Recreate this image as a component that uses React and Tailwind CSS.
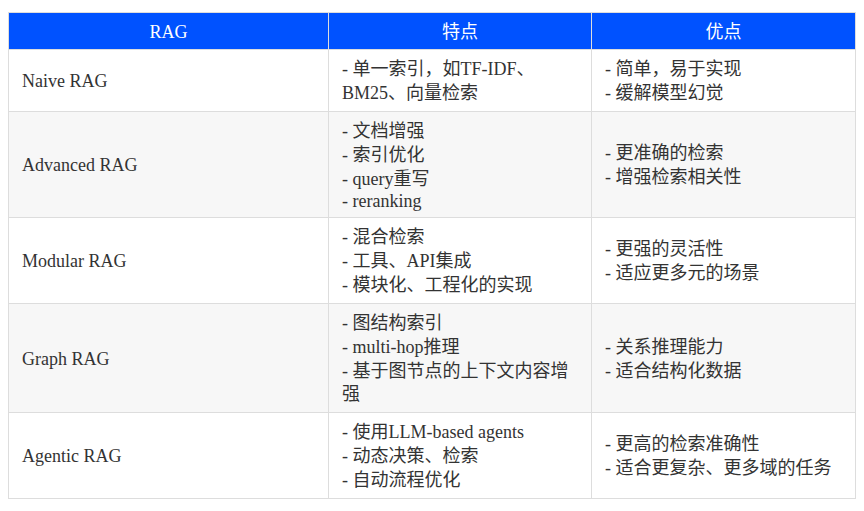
import React from "react";

const rows = [
  {
    name: "Naive RAG",
    feat: ["- 单一索引，如TF-IDF、", "BM25、向量检索"],
    adv: ["- 简单，易于实现", "- 缓解模型幻觉"],
  },
  {
    name: "Advanced RAG",
    feat: ["- 文档增强", "- 索引优化", "- query重写", { t: "- reranking", h: "leading-[20px]" }],
    adv: ["- 更准确的检索", "- 增强检索相关性"],
  },
  {
    name: "Modular RAG",
    feat: ["- 混合检索", "- 工具、API集成", "- 模块化、工程化的实现"],
    adv: ["- 更强的灵活性", "- 适应更多元的场景"],
  },
  {
    name: "Graph RAG",
    feat: ["- 图结构索引", "- multi-hop推理", "- 基于图节点的上下文内容增", { t: "强", h: "leading-[23px]" }],
    adv: ["- 关系推理能力", "- 适合结构化数据"],
  },
  {
    name: "Agentic RAG",
    feat: ["- 使用LLM-based agents", "- 动态决策、检索", "- 自动流程优化"],
    adv: ["- 更高的检索准确性", "- 适合更复杂、更多域的任务"],
  },
];

const FONT =
  "font-['Liberation_Serif','Noto_Sans_CJK_SC',serif]";

function Lines({ items }) {
  return (
    <div>
      {items.map((it, i) => {
        const obj = typeof it === "object";
        const text = obj ? it.t : it;
        const h = obj ? it.h : "leading-[24px]";
        return (
          <div key={i} className={"whitespace-nowrap " + h}>
            {text}
          </div>
        );
      })}
    </div>
  );
}

export default function App() {
  return (
    <div
      className={
        "bg-white w-[864px] h-[511px] pt-[12px] pl-[8px] text-[18px] text-[#333] " + FONT
      }
    >
      <table
        className={
          "border-collapse table-fixed w-[847px] text-[18px] text-[#333] " + FONT
        }
      >
        <colgroup>
          <col className="w-[320px]" />
          <col className="w-[263px]" />
          <col className="w-[264px]" />
        </colgroup>
        <thead>
          <tr className="bg-[#0052ff] text-white">
            <th className="border border-[#ddd] pt-[7px] pb-[5px] px-[13px] font-normal leading-[24px] text-center">
              RAG
            </th>
            <th className="border border-[#ddd] pt-[7px] pb-[5px] px-[13px] font-normal leading-[24px] text-center">
              特点
            </th>
            <th className="border border-[#ddd] pt-[7px] pb-[5px] px-[13px] font-normal leading-[24px] text-center">
              优点
            </th>
          </tr>
        </thead>
        <tbody>
          {rows.map((r, i) => (
            <tr key={r.name} className={i % 2 === 1 ? "bg-[#f7f7f7]" : "bg-white"}>
              <td className="border border-[#ddd] pt-[7px] pb-[6px] px-[13px] align-middle leading-[24px]">
                {r.name}
              </td>
              <td className="border border-[#ddd] pt-[7px] pb-[6px] px-[13px] align-middle">
                <Lines items={r.feat} />
              </td>
              <td className="border border-[#ddd] pt-[7px] pb-[6px] px-[13px] align-middle">
                <Lines items={r.adv} />
              </td>
            </tr>
          ))}
        </tbody>
      </table>
    </div>
  );
}
